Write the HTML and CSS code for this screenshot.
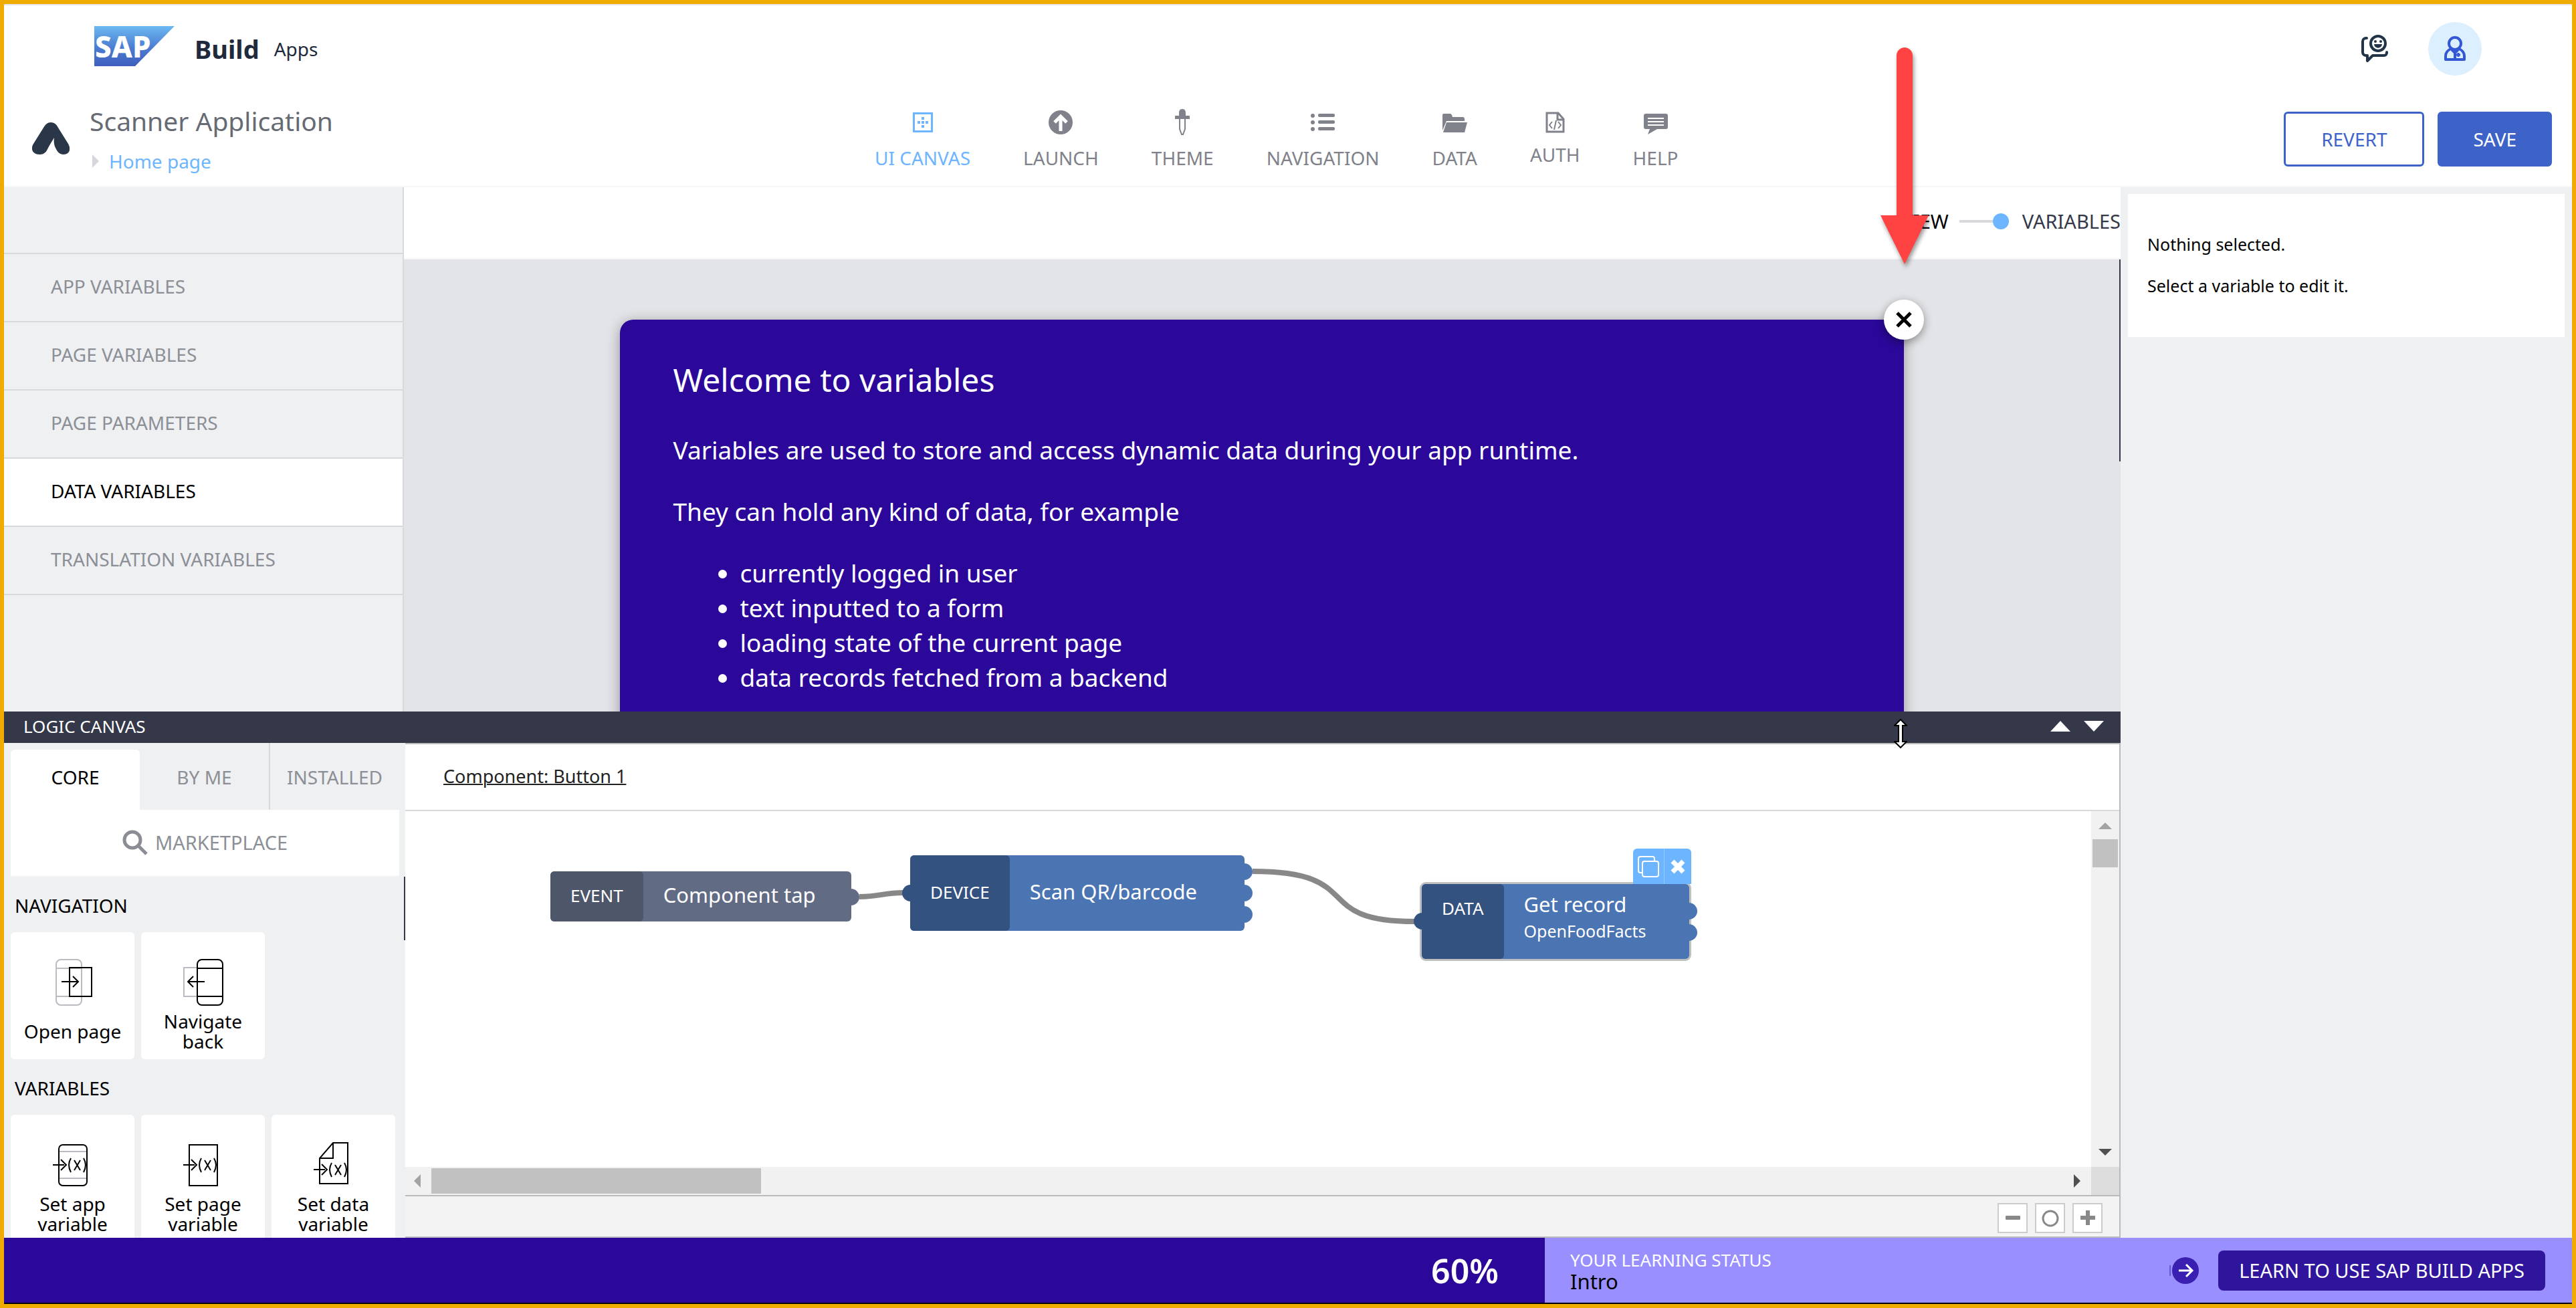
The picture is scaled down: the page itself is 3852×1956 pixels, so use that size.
FILE: index.html
```html
<!DOCTYPE html>
<html lang="en">
<head>
<meta charset="utf-8">
<title>SAP Build Apps - Scanner Application</title>
<link rel="stylesheet" href="styles.css">
</head>
<body>
<div class="app">
  <header class="shell">
    <div class="brand">
      <svg class="brand-logo" viewBox="0 0 120 60" role="img" aria-label="SAP">
        <defs><linearGradient id="sap" x1="0" y1="0" x2="0" y2="1"><stop offset="0" stop-color="#6cb8f2"/><stop offset=".55" stop-color="#4a7cd0"/><stop offset="1" stop-color="#3f5fbd"/></linearGradient></defs>
        <path d="M0 0h120L61 60H0z" fill="url(#sap)"/>
        <text x="1" y="47" class="brand-word">SAP</text>
      </svg>
      <strong class="brand-name">Build</strong>
      <span class="brand-sub">Apps</span>
    </div>
    <div class="shell-tools">
      <button class="icon-button" aria-label="Feedback">
        <svg width="42" height="42" viewBox="0 0 42 42" fill="none" stroke="#223548" stroke-width="4" stroke-linecap="round" stroke-linejoin="round"><path d="M9 5H8a5 5 0 0 0-5 5v16a5 5 0 0 0 5 5h2v8l8-8h17a4 4 0 0 0 4-4v-1"/><circle cx="26" cy="13" r="11"/><circle cx="22" cy="10" r="1" stroke-width="2"/><circle cx="30" cy="10" r="1" stroke-width="2"/><path d="M21 15c2 5 8 5 10 0z" stroke-width="2" fill="#223548"/></svg>
      </button>
      <button class="avatar" aria-label="User profile">
        <svg width="32" height="38" viewBox="0 0 32 38" fill="none" stroke="#3457d5" stroke-width="4" stroke-linejoin="round"><circle cx="16" cy="11" r="9"/><path d="M10 19C5 21 2 25 2 30v5h28v-5c0-5-3-9-8-11"/><path d="M11 20l5 5 5-5M16 24v11" /><path d="M21 25v6M18 28h6" stroke-width="3"/></svg>
      </button>
    </div>
  </header>

  <div class="toolbar">
    <div class="project">
      <svg class="project-logo" width="56" height="50" viewBox="0 0 56 50" fill="#2a3749"><path d="M28 0c6 0 9 4 11 8l15 24c5 9 1 16-7 16-6 0-9-4-11-8-3-5-4-10-3-17-4 6-8 13-11 19-3 5-7 6-11 6C1 48-3 40 2 32L17 8c3-5 6-8 11-8z"/></svg>
      <div class="project-text">
        <h1 class="project-title">Scanner Application</h1>
        <a class="crumb" href="#home"><svg width="10" height="20" viewBox="0 0 10 20"><path d="M0 0l10 10L0 20z" fill="#d5d7dd"/></svg>Home page</a>
      </div>
    </div>
    <nav class="modes">
      <a class="mode mode--active" href="#ui"><svg viewBox="0 0 40 40"><path d="M5 5h30v30H5zm3 3v24h24V8z" fill-rule="evenodd" fill="currentColor"/><path d="M18 12h4v4h-4zM18 18h4v4h-4zM18 24h4v4h-4zM12 18h4v4h-4zM24 18h4v4h-4z" fill="currentColor"/></svg>UI CANVAS</a>
      <a class="mode" href="#launch"><svg viewBox="0 0 40 40"><circle cx="20" cy="20" r="18" fill="currentColor"/><path d="M20 33V12M11 20l9-9 9 9" fill="none" stroke="#fff" stroke-width="5"/></svg>LAUNCH</a>
      <a class="mode" href="#theme"><svg viewBox="0 0 40 40" fill="currentColor"><path d="M20 0c4 0 5 3 5 6v4h6v5H9v-5h6V6c0-3 1-6 5-6z"/><path d="M16 15v15l3 8h2l3-8V15" fill="none" stroke="currentColor" stroke-width="2"/></svg>THEME</a>
      <a class="mode" href="#nav"><svg viewBox="0 0 40 40" fill="currentColor"><circle cx="5" cy="10" r="3"/><circle cx="5" cy="20" r="3"/><circle cx="5" cy="30" r="3"/><rect x="13" y="7" width="25" height="5" rx="2"/><rect x="13" y="17" width="25" height="5" rx="2"/><rect x="13" y="27" width="25" height="5" rx="2"/></svg>NAVIGATION</a>
      <a class="mode" href="#data"><svg viewBox="0 0 40 40" fill="currentColor"><path d="M2 32V9q0-2 2-2h9q3 0 4 5h15q3 0 3 3v3H8z"/><path d="M8 20h31l-4 15H3z"/></svg>DATA</a>
      <a class="mode mode--tight" href="#auth"><svg viewBox="0 0 40 40" fill="none" stroke="currentColor" stroke-width="3"><path d="M8 6h17l8 9v19H8zM24 6v10h9"/><path d="M16 19l-4 5 4 5M25 19l4 5-4 5M22 17l-3 14" stroke-width="2"/></svg>AUTH</a>
      <a class="mode" href="#help"><svg viewBox="0 0 40 40"><path d="M5 7h30q3 0 3 3v17q0 3-3 3H22l-14 8 3-8H5q-3 0-3-3V10q0-3 3-3z" fill="currentColor"/><path d="M8 14h24M8 19h24M8 24h24" stroke="#fff" stroke-width="2"/></svg>HELP</a>
    </nav>
    <div class="actions">
      <button class="btn btn--outline">REVERT</button>
      <button class="btn btn--solid">SAVE</button>
    </div>
  </div>

  <div class="body">
    <main class="work">
      <section class="variables">
        <nav class="side">
          <a class="side-item" href="#app">APP VARIABLES</a>
          <a class="side-item" href="#page">PAGE VARIABLES</a>
          <a class="side-item" href="#params">PAGE PARAMETERS</a>
          <a class="side-item side-item--active" href="#datavars">DATA VARIABLES</a>
          <a class="side-item" href="#translation">TRANSLATION VARIABLES</a>
        </nav>
        <div class="stage">
          <div class="switch">
            <a href="#view" class="switch-view">VIEW</a>
            <span class="switch-track"><span class="switch-dot"></span></span>
            <a href="#variables" class="switch-vars">VARIABLES</a>
          </div>
          <div class="canvas">
            <span class="canvas-scroll"></span>
            <article class="welcome">
              <button class="welcome-close" aria-label="Close"><svg width="26" height="26" viewBox="0 0 26 26"><path d="M3 3l20 20M23 3L3 23" stroke="#000" stroke-width="5"/></svg></button>
              <h2>Welcome to variables</h2>
              <p>Variables are used to store and access dynamic data during your app runtime.</p>
              <p>They can hold any kind of data, for example</p>
              <ul>
                <li>currently logged in user</li>
                <li>text inputted to a form</li>
                <li>loading state of the current page</li>
                <li>data records fetched from a backend</li>
              </ul>
            </article>
          </div>
        </div>
      </section>

      <div class="logic-bar">
        <span>LOGIC CANVAS</span>
        <span class="logic-arrows">
          <button class="icon-button" aria-label="Expand"><svg width="30" height="16" viewBox="0 0 30 16"><path d="M15 0l15 16H0z" fill="#fff"/></svg></button>
          <button class="icon-button" aria-label="Collapse"><svg width="30" height="16" viewBox="0 0 30 16"><path d="M0 0h30L15 16z" fill="#fff"/></svg></button>
        </span>
        <svg class="cursor" width="20" height="44" viewBox="0 0 20 44"><path d="M10 1l9 9h-6v24h6l-9 9-9-9h6V10H1z" fill="#fff" stroke="#000" stroke-width="2"/></svg>
      </div>

      <section class="logic">
        <aside class="library">
          <div class="tabs">
            <button class="tab tab--active">CORE</button>
            <button class="tab">BY ME</button>
            <button class="tab tab--last">INSTALLED</button>
          </div>
          <button class="market"><svg width="40" height="38" viewBox="0 0 40 38" fill="none" stroke="#8a8d94"><circle cx="15" cy="15" r="12" stroke-width="5"/><path d="M24 24l12 12" stroke-width="5"/></svg>MARKETPLACE</button>
          <div class="blocks">
            <h3>NAVIGATION</h3>
            <div class="cards">
              <button class="card"><svg width="70" height="70" viewBox="0 0 70 70" fill="none" stroke="#000" stroke-width="2"><g stroke="#bbbcc2"><rect x="10" y="1" width="38" height="68" rx="7"/><path d="M10 14h38M10 56h38"/></g><path d="M30 13h33v43H30z"/><path d="M18 34h25M35 26l8 8-8 8"/></svg><span>Open page</span></button>
              <button class="card"><svg width="70" height="70" viewBox="0 0 70 70" fill="none" stroke="#000" stroke-width="2"><path d="M26 13H6v43h20" stroke="#bbbcc2"/><rect x="26" y="1" width="38" height="68" rx="7"/><path d="M26 14h38M26 56h38M37 34H12M20 26l-8 8 8 8"/></svg><span>Navigate<br>back</span></button>
            </div>
            <h3>VARIABLES</h3>
            <div class="cards">
              <button class="card"><svg width="70" height="70" viewBox="0 0 70 70" fill="none" stroke="#000" stroke-width="2"><path d="M14 15h42M14 55h42" stroke="#bbbcc2"/><rect x="14" y="5" width="42" height="61" rx="6"/><path d="M5 35h17M17 27l8 8-8 8M32 25q-6 10 0 21M51 25q6 10 0 21M37 28l9 15M46 28l-9 15"/></svg><span>Set app<br>variable</span></button>
              <button class="card"><svg width="70" height="70" viewBox="0 0 70 70" fill="none" stroke="#000" stroke-width="2"><path d="M14 5h42v61H14zM5 35h17M17 27l8 8-8 8M32 25q-6 10 0 21M51 25q6 10 0 21M37 28l9 15M46 28l-9 15"/></svg><span>Set page<br>variable</span></button>
              <button class="card"><svg width="70" height="70" viewBox="0 0 70 70" fill="none" stroke="#000" stroke-width="2"><path d="M34 2h22v61H14V25zM34 2v23H14M5 42h17M17 34l8 8-8 8M32 32q-6 10 0 21M51 32q6 10 0 21M37 35l9 15M46 35l-9 15"/></svg><span>Set data<br>variable</span></button>
            </div>
          </div>
          <span class="library-scroll"></span>
        </aside>

        <div class="flow">
          <div class="flow-head"><a href="#component">Component: Button 1</a></div>
          <div class="flow-area">
            <div class="board">
              <svg class="wires" width="1600" height="300" viewBox="0 0 1600 300" fill="none" stroke="#888" stroke-width="8"><path d="M679 128C710 128 715 122 744 122"/><path d="M1267 90C1440 90 1350 165 1509 165"/></svg>
              <div class="node node--event">
                <span class="node-tag">EVENT</span><span class="node-name">Component tap</span>
                <i class="port port--out"></i>
              </div>
              <div class="node node--device">
                <span class="node-tag">DEVICE</span><span class="node-name">Scan QR/barcode</span>
                <i class="port port--in"></i>
                <span class="ports"><i class="port"></i><i class="port"></i><i class="port"></i></span>
              </div>
              <div class="node node--data">
                <span class="node-tag">DATA</span><span class="node-name">Get record<small>OpenFoodFacts</small></span>
                <i class="port port--in"></i>
                <span class="ports"><i class="port"></i><i class="port"></i></span>
                <span class="node-tools">
                  <button class="icon-button" aria-label="Copy"><svg width="32" height="32" viewBox="0 0 32 32" fill="none" stroke="#fff" stroke-width="2"><path d="M6 25H4q-3 0-3-3V4q0-3 3-3h18q3 0 3 3v3"/><rect x="7" y="8" width="24" height="23" rx="3"/></svg></button>
                  <button class="icon-button" aria-label="Delete"><svg width="22" height="22" viewBox="0 0 22 22"><path d="M3 3l16 16M19 3L3 19" stroke="#fff" stroke-width="7"/></svg></button>
                </span>
              </div>
            </div>
            <div class="vbar"><svg width="20" height="10" viewBox="0 0 20 10"><path d="M10 0l10 10H0z" fill="#a3a3a3"/></svg><span class="vthumb"></span><svg width="20" height="10" viewBox="0 0 20 10"><path d="M0 0h20L10 10z" fill="#505050"/></svg></div>
            <div class="hbar"><svg width="10" height="20" viewBox="0 0 10 20"><path d="M10 0v20L0 10z" fill="#a3a3a3"/></svg><span class="hthumb"></span><svg width="10" height="20" viewBox="0 0 10 20"><path d="M0 0l10 10L0 20z" fill="#505050"/></svg></div>
            <div class="corner"></div>
          </div>
          <div class="flow-foot">
            <button class="zoom" aria-label="Zoom out"><svg width="26" height="26" viewBox="0 0 26 26"><rect x="2" y="9" width="22" height="6" rx="1" fill="#888"/></svg></button>
            <button class="zoom" aria-label="Reset zoom"><svg width="26" height="26" viewBox="0 0 26 26"><circle cx="13" cy="13" r="11" fill="none" stroke="#888" stroke-width="3"/></svg></button>
            <button class="zoom" aria-label="Zoom in"><svg width="26" height="26" viewBox="0 0 26 26"><path d="M2 9h8V1h6v8h8v6h-8v8h-6v-8H2z" fill="#888"/></svg></button>
          </div>
        </div>
      </section>
    </main>

    <aside class="inspector">
      <div class="inspector-card">
        <p>Nothing selected.</p>
        <p>Select a variable to edit it.</p>
      </div>
    </aside>
  </div>

  <footer class="learn">
    <div class="learn-progress" style="width:60%">60%</div>
    <div class="learn-status"><span class="learn-label">YOUR LEARNING STATUS</span><span class="learn-step">Intro</span></div>
    <button class="icon-button" aria-label="Next"><svg width="46" height="42" viewBox="0 0 46 42"><path d="M2 13v16" stroke="#3a1fa8" stroke-width="1"/><circle cx="25" cy="21" r="20" fill="#3a1fb0"/><path d="M15 21h19M26 12l9 9-9 9" fill="none" stroke="#fff" stroke-width="3"/></svg></button>
    <a class="learn-link" href="#learn">LEARN TO USE SAP BUILD APPS</a>
  </footer>

  <svg class="pointer" width="92" height="350" viewBox="0 0 92 350"><path d="M34 29a12 12 0 0 1 24 0V268H82L46 341 10 268H34z" fill="#ff4343"/></svg>
</div>
</body>
</html>
```
FILE: styles.css
```css
* { box-sizing: border-box; margin: 0; padding: 0; }

body {
  font-family: "Noto Sans", "Open Sans", sans-serif;
  font-size: 28px;
  line-height: 36px;
  color: #000;
}

button { font: inherit; color: inherit; background: none; border: 0; }
a { color: inherit; text-decoration: none; }
svg { display: block; flex: none; }

.app {
  position: relative;
  display: flex;
  flex-direction: column;
  height: 100vh;
  border: 6px solid #f0ab00;
  background: #fff;
}

/* Shell header */
.shell {
  display: flex;
  justify-content: space-between;
  align-items: center;
  padding: 25px 135px 25px;
  border-top: 2px solid #e5e5e5;
}
.brand { display: flex; align-items: center; }
.brand-logo { width: 120px; height: 60px; margin-bottom: 8px; }
.brand-word { font: 800 44px "Noto Sans", sans-serif; fill: #fff; }
.brand-name { margin: 0 22px 0 30px; font-size: 38px; color: #1f2a3c; }
.brand-sub { color: #1f2a3c; }
.shell-tools { display: flex; align-items: center; gap: 59px; }
.avatar {
  display: grid;
  place-items: center;
  width: 80px;
  height: 80px;
  border-radius: 50%;
  background: #dcefff;
}

/* Project toolbar */
.toolbar {
  display: flex;
  align-items: center;
  height: 142px;
  padding: 0 30px 0 42px;
  border-bottom: 2px solid #f7f7f9;
}
.project { display: flex; align-items: center; flex: 0 0 1260px; gap: 30px; }
.project-text { display: flex; flex-direction: column; gap: 14px; }
.project-title { font-size: 39px; line-height: 52px; font-weight: 400; color: #666a73; }
.crumb { display: flex; align-items: center; gap: 15px; padding-left: 4px; line-height: 40px; color: #6db5ff; }
.modes { display: flex; align-items: flex-start; gap: 79px; color: #7f828a; }
.mode { display: flex; flex-direction: column; align-items: center; gap: 15px; }
.mode svg { width: 40px; height: 40px; }
.mode--active { color: #6db5ff; }
.mode--tight { gap: 10px; }
.actions { display: flex; gap: 20px; margin-left: auto; }
.btn { height: 82px; padding: 0 50px; border: 3px solid #3e63c8; border-radius: 6px; }
.btn--outline { padding: 0 53px; color: #3e63c8; }
.btn--solid { background: #3e63c8; color: #fff; }

/* Main split */
.body { display: flex; flex: 1; min-height: 0; }
.work {
  display: grid;
  flex: 1;
  min-width: 0;
  grid-template-rows: minmax(0, 784fr) auto minmax(0, 740fr);
}
.variables { display: flex; }

.side { flex: 0 0 598px; padding-top: 98px; background: #eff0f2; border-right: 2px solid #d7d9dd; }
.side-item { display: flex; align-items: center; height: 102px; padding: 0 0 4px 70px; border-top: 2px solid #d7d9dd; color: #8c8f96; }
.side-item:last-child { height: 104px; border-bottom: 2px solid #d7d9dd; }
.side-item--active { background: #fff; color: #000; }

.stage { display: flex; flex-direction: column; flex: 1; min-width: 0; }
.switch {
  display: flex;
  justify-content: flex-end;
  align-items: center;
  height: 108px;
  padding-bottom: 4px;
  border-bottom: 2px solid #f5f5f7;
  font-size: 29px;
}
.switch-track { display: flex; align-items: center; justify-content: flex-end; width: 74px; height: 4px; margin: 0 20px 0 16px; background: linear-gradient(#d7d9dd, #d7d9dd) no-repeat 0 0 / 54px 4px; }
.switch-dot { width: 24px; height: 24px; border-radius: 50%; background: #6db5ff; }
.switch-vars { color: #343849; }

.canvas { position: relative; flex: 1; min-height: 0; padding: 90px 2px 0 0; overflow: hidden; background: #e3e4e7; }
.canvas-scroll { position: absolute; top: 0; right: 0; width: 2px; height: 302px; background: #343849; }
.welcome {
  position: relative;
  width: 75%;
  max-width: 1920px;
  min-height: 100%;
  margin: 0 auto;
  padding: 58px 80px;
  border-radius: 20px;
  background: #2b089a;
  box-shadow: 0 4px 20px rgba(0, 0, 0, 0.35);
  color: #fff;
  font-size: 37px;
  line-height: 52px;
}
.welcome h2 { margin-bottom: 47px; font-size: 48px; line-height: 64px; font-weight: 400; }
.welcome p { margin-bottom: 40px; }
.welcome ul { padding-left: 100px; }
.welcome-close {
  position: absolute;
  top: -30px;
  right: -30px;
  display: grid;
  place-items: center;
  width: 60px;
  height: 60px;
  border-radius: 50%;
  background: #fff;
  box-shadow: 0 4px 14px rgba(0, 0, 0, 0.4);
}

.logic-bar {
  position: relative;
  display: flex;
  justify-content: space-between;
  padding: 4px 25px 7px 29px;
  background: #343849;
  color: #fff;
  font-size: 26px;
}
.logic-arrows { display: flex; align-items: center; gap: 20px; }
.cursor { position: absolute; right: 319px; top: 11px; z-index: 1; }

/* Logic library */
.logic { display: flex; }
.library { position: relative; flex: 0 0 600px; overflow: hidden; padding: 0 9px 0 10px; background: #eff0f2; }
.tabs { display: grid; grid-template-columns: 193px 195px 1fr; height: 100px; }
.tab { padding-top: 2px; color: #8c8f96; border-right: 2px solid #d7d9dd; }
.tab--active { margin-top: 10px; padding: 0 0 8px; border: 0; border-radius: 6px 6px 0 0; background: #fff; color: #000; }
.tab--last { border: 0; }
.market { display: flex; align-items: center; justify-content: center; gap: 9px; width: 100%; height: 100px; border-bottom: 2px solid #f7f7f9; background: #fff; color: #8c8f96; font-size: 29px; }
.blocks h3 { padding: 25px 6px 22px; font-size: 28px; font-weight: 400; }
.cards { display: flex; gap: 10px; }
.card {
  display: flex;
  flex-direction: column;
  align-items: center;
  width: 185px;
  height: 190px;
  padding-top: 40px;
  border-radius: 6px;
  background: #fff;
  line-height: 30px;
}
.card span { display: flex; flex: 1; align-items: center; margin: 5px 0 9px; }
.library-scroll { position: absolute; top: 200px; right: 0; width: 2px; height: 95px; background: #343849; }

/* Flow editor */
.flow { display: flex; flex-direction: column; flex: 1; min-width: 0; border: 2px solid #bbb; border-left: 0; }
.flow-head { display: flex; align-items: center; height: 100px; padding: 0 57px; border-bottom: 2px solid #d7d8dc; font-size: 27px; color: #222; }
.flow-head a { padding-bottom: 3px; text-decoration: underline; text-decoration-thickness: 2px; }
.flow-area { display: grid; flex: 1; min-height: 0; grid-template: minmax(0, 1fr) 42px / minmax(0, 1fr) 42px; }
.board { position: relative; overflow: hidden; }
.vbar, .hbar { display: flex; align-items: center; background: #f1f1f1; }
.vbar { flex-direction: column; padding: 17px 0; }
.vbar svg:last-child { margin-top: auto; }
.vthumb { width: 38px; height: 42px; margin-top: 15px; background: #c1c1c1; }
.hbar { padding: 0 16px 0 13px; }
.hbar svg:last-child { margin-left: auto; }
.hthumb { width: 493px; height: 38px; margin-left: 16px; background: #c1c1c1; }
.corner { background: #dcdcdc; }
.flow-foot { display: flex; justify-content: flex-end; gap: 11px; height: 62px; padding: 10px 25px 0 0; border-top: 2px solid #bbb; background: #f3f3f3; }
.zoom { display: grid; place-items: center; width: 45px; height: 45px; border: 2px solid #ccc; background: #fff; }

/* Logic nodes */
.wires { position: absolute; left: 0; top: 0; }
.node { position: absolute; z-index: 0; display: flex; border-radius: 6px; background: #4b74b2; color: #fff; font-size: 31px; }
.node-tag { display: flex; align-items: center; padding: 0 30px 4px; border-radius: 6px; background: #34527f; font-size: 26px; }
.node-name { display: flex; flex-direction: column; justify-content: center; padding: 0 0 6px 30px; }
.node-name small { font-size: 25px; }
.node--event { left: 217px; top: 90px; width: 450px; height: 75px; background: #626b84; }
.node--event .node-tag { background: #4e566a; }
.node--device { left: 755px; top: 66px; width: 500px; height: 113px; }
.node--data { left: 1520px; top: 109px; width: 400px; height: 112px; box-shadow: 0 0 0 3px #c0c0c0; }
.node--data .node-tag { align-items: flex-start; padding-top: 18px; }
.node--data .node-name { justify-content: flex-start; gap: 4px; padding-top: 12px; }
.ports { position: absolute; z-index: -1; right: -12px; top: 0; bottom: 0; display: flex; flex-direction: column; justify-content: center; gap: 7px; }
.port { width: 25px; height: 25px; border-radius: 50%; background: #4b74b2; }
.port--in { position: absolute; left: -12px; top: calc(50% - 13px); background: #34527f; }
.port--out { position: absolute; right: -12px; top: calc(50% - 12px); background: #626b84; }
.node-tools { position: absolute; right: -3px; bottom: 100%; display: flex; height: 53px; border-radius: 6px 6px 0 0; background: #6db5ff; }
.node-tools button { display: grid; place-items: center; width: 40px; }
.node-tools button:first-child { width: 47px; border-right: 1px solid #94c9ff; }

/* Inspector */
.inspector { flex: 0 0 675px; padding: 10px 11px; background: #eff0f2; }
.inspector-card { display: flex; flex-direction: column; gap: 26px; padding: 57px 29px 59px; background: #fff; font-size: 25px; }

/* Learning bar */
.learn { display: flex; align-items: center; height: 99px; border-bottom: 2px solid #000; background: #998fff; }
.learn-progress { display: flex; flex: none; align-items: center; justify-content: flex-end; align-self: stretch; padding-right: 69px; background: #2b089a; color: #fff; font-size: 50px; font-weight: 600; }
.learn-status { display: flex; flex: 1; flex-direction: column; padding: 5px 0 0 38px; }
.learn-label { color: #fff; font-size: 26px; line-height: 28px; }
.learn-step { font-size: 31px; line-height: 36px; }
.learn-link { display: grid; place-items: center; height: 60px; margin: 0 40px 0 28px; padding: 0 31px; border-radius: 8px; background: #2f149c; color: #fff; font-size: 29px; }

.pointer { position: absolute; right: 952px; top: 48px; filter: drop-shadow(2px 5px 3px rgba(0, 0, 0, 0.4)); }
```
